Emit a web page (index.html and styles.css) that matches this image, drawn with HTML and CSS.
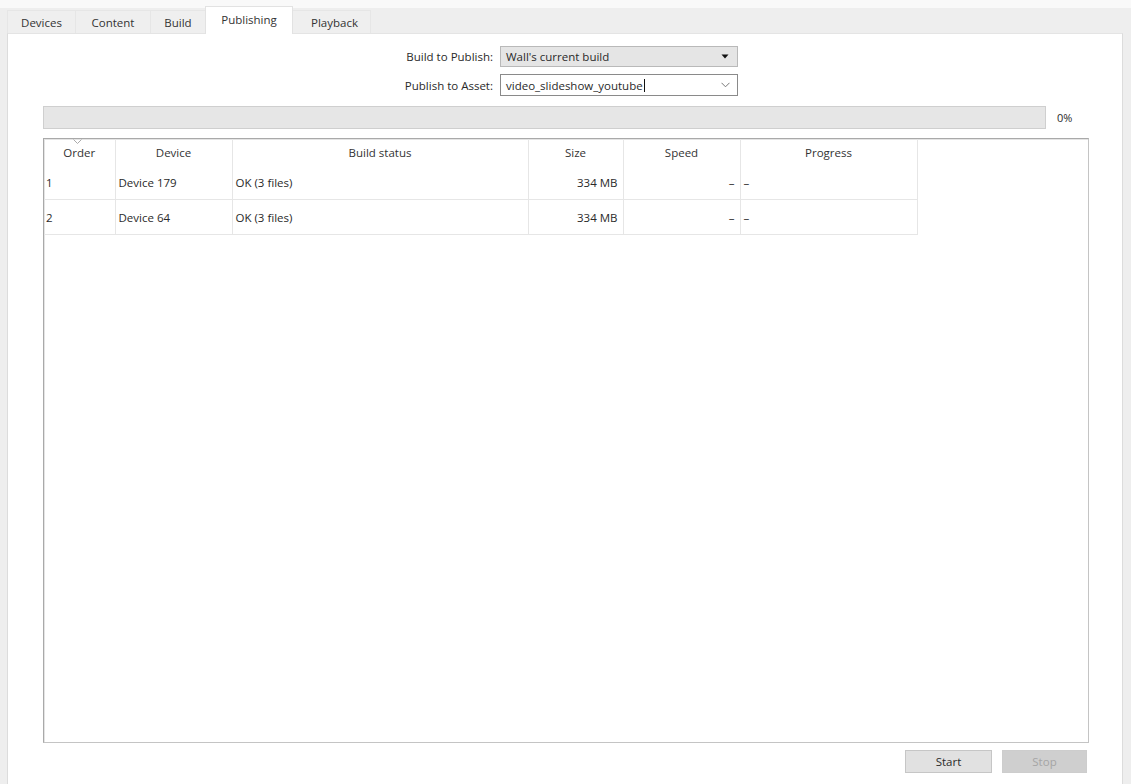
FILE: index.html
```html
<!DOCTYPE html>
<html>
<head>
<meta charset="utf-8">
<link rel="stylesheet" href="styles.css">
</head>
<body>
<div class="window">
  <div class="tabbar">
    <div class="tab t-devices">Devices</div>
    <div class="tab t-content">Content</div>
    <div class="tab t-build">Build</div>
    <div class="tab t-pub selected">Publishing</div>
    <div class="tab t-play">Playback</div>
  </div>
  <div class="panel">
    <div class="form">
      <label class="lbl">Build to Publish:</label>
      <div class="select">
        <span>Wall's current build</span>
        <svg class="tri" width="8" height="5" viewBox="0 0 8 5"><path d="M0.5 0.5H7.5L4 4.5Z" fill="#111"/></svg>
      </div>
      <label class="lbl">Publish to Asset:</label>
      <div class="combo">
        <span>video_slideshow_youtube<span class="caret"></span></span>
        <svg class="chev" width="9" height="6" viewBox="0 0 9 6"><path d="M0.5 0.8L4.5 4.8L8.5 0.8" fill="none" stroke="#777" stroke-width="1"/></svg>
      </div>
    </div>
    <div class="progress-row">
      <div class="progress"></div>
      <span class="pct">0%</span>
    </div>
    <div class="tablebox">
      <table class="grid">
        <colgroup>
          <col class="c-order"><col class="c-device"><col class="c-status"><col class="c-size"><col class="c-speed"><col class="c-prog">
        </colgroup>
        <thead>
          <tr>
            <th class="sorted">Order<svg class="sort" width="9" height="5" viewBox="0 0 9 5"><path d="M0.5 0.5L4.5 4.5L8.5 0.5" fill="none" stroke="#aaa" stroke-width="1"/></svg></th>
            <th>Device</th>
            <th>Build status</th>
            <th>Size</th>
            <th>Speed</th>
            <th>Progress</th>
          </tr>
        </thead>
        <tbody>
          <tr>
            <td>1</td><td>Device 179</td><td>OK (3 files)</td><td class="r">334 MB</td><td class="r">–</td><td>–</td>
          </tr>
          <tr>
            <td>2</td><td>Device 64</td><td>OK (3 files)</td><td class="r">334 MB</td><td class="r">–</td><td>–</td>
          </tr>
        </tbody>
      </table>
    </div>
    <div class="buttons">
      <button class="btn">Start</button>
      <button class="btn disabled">Stop</button>
    </div>
  </div>
</div>
</body>
</html>
```

FILE: styles.css
```css
html, body {
  margin: 0;
  padding: 0;
}
body {
  width: 1131px;
  height: 784px;
  background: #f4f4f4;
  font-family: "Open Sans", "Noto Sans", sans-serif;
  font-size: 11.5px;
  color: #2a2a2a;
  overflow: hidden;
}
.window {
  display: flex;
  flex-direction: column;
  height: 784px;
  background: linear-gradient(#f9f9f9 0, #f9f9f9 8px, #eeeeee 8px);
}
.tabbar {
  display: flex;
  align-items: flex-end;
  height: 34px;
  padding-left: 7px;
  box-sizing: border-box;
}
.tab {
  height: 24px;
  display: flex;
  align-items: center;
  justify-content: center;
  box-sizing: border-box;
  border: 1px solid #e6e6e6;
  border-bottom: none;
  margin-right: -1px;
  background: #efefef;
  color: #333;
}
.t-devices { width: 69px; }
.t-content { width: 76px; }
.t-build { width: 56px; }
.t-pub { width: 88px; }
.t-play { width: 79px; padding-left: 6px; }
.tab.selected {
  height: 28px;
  background: #ffffff;
  border-color: #e2e2e2;
  position: relative;
  z-index: 1;
  padding-bottom: 3px;
}
.panel {
  flex: 1;
  width: 1116px;
  margin-left: 7px;
  box-sizing: border-box;
  background: #ffffff;
  border-left: 1px solid #dcdcdc;
  border-right: 1px solid #dcdcdc;
  border-top: 1px solid #e4e4e4;
  margin-top: -1px;
  display: flex;
  flex-direction: column;
  padding: 0 34px 0 35px;
}
.form {
  display: grid;
  grid-template-columns: 113px 238px;
  column-gap: 7px;
  row-gap: 7px;
  margin-top: 12px;
  margin-left: 337px;
  align-items: center;
}
.lbl {
  text-align: right;
  white-space: nowrap;
  color: #2a2a2a;
}
.select, .combo {
  height: 21px;
  box-sizing: border-box;
  display: flex;
  align-items: center;
  justify-content: space-between;
  padding: 0 6px 0 5px;
}
.select {
  background: #e5e5e5;
  border: 1px solid #b9b9b9;
}
.combo {
  height: 22px;
  background: #ffffff;
  border: 1px solid #8a8a8a;
}
.caret {
  display: inline-block;
  width: 1px;
  height: 13px;
  background: #111;
  vertical-align: -2px;
  margin-left: 1px;
}
.tri { margin-right: 2px; }
.chev { margin-right: 1px; }
.progress-row {
  display: flex;
  align-items: center;
  margin-top: 10px;
}
.progress {
  width: 1003px;
  height: 23px;
  box-sizing: border-box;
  background: #e6e6e6;
  border: 1px solid #cfcfcf;
}
.pct {
  margin-left: 11px;
  font-size: 11px;
}
.tablebox {
  margin-top: 9px;
  height: 605px;
  width: 1046px;
  box-sizing: border-box;
  border: 1px solid #a9a9a9;
  border-right-color: #c4c4c4;
  border-bottom-color: #c4c4c4;
  box-shadow: inset 1px 1px 0 #e4e4e4;
  background: #ffffff;
}
.grid {
  border-collapse: collapse;
  table-layout: fixed;
  width: 873px;
}
.c-order { width: 71px; }
.c-device { width: 117px; }
.c-status { width: 296px; }
.c-size { width: 95px; }
.c-speed { width: 117px; }
.c-prog { width: 177px; }
.grid th {
  height: 26px;
  font-weight: normal;
  text-align: center;
  border-right: 1px solid #e6e6e6;
  padding: 0;
  color: #333;
}
.grid th.sorted {
  position: relative;
}
.sort {
  position: absolute;
  left: 29px;
  top: 0px;
}
.grid td {
  height: 34px;
  padding: 0 3px;
  border-right: 1px solid #e6e6e6;
  border-bottom: 1px solid #e6e6e6;
  white-space: nowrap;
  color: #2a2a2a;
}
.grid td:first-child { padding-left: 2px; }
.grid td.r {
  text-align: right;
  padding-right: 5px;
}
.buttons {
  display: flex;
  justify-content: flex-end;
  gap: 10px;
  margin-top: 7px;
  padding-right: 1px;
}
.btn {
  width: 87px;
  height: 23px;
  font-family: "Open Sans", "Noto Sans", sans-serif;
  font-size: 11.5px;
  background: #e1e1e1;
  border: 1px solid #c6c6c6;
  color: #2a2a2a;
  padding: 0;
}
.btn.disabled {
  width: 85px;
  background: #cfcfcf;
  border-color: #cdcdcd;
  color: #a5a5a5;
}
```
